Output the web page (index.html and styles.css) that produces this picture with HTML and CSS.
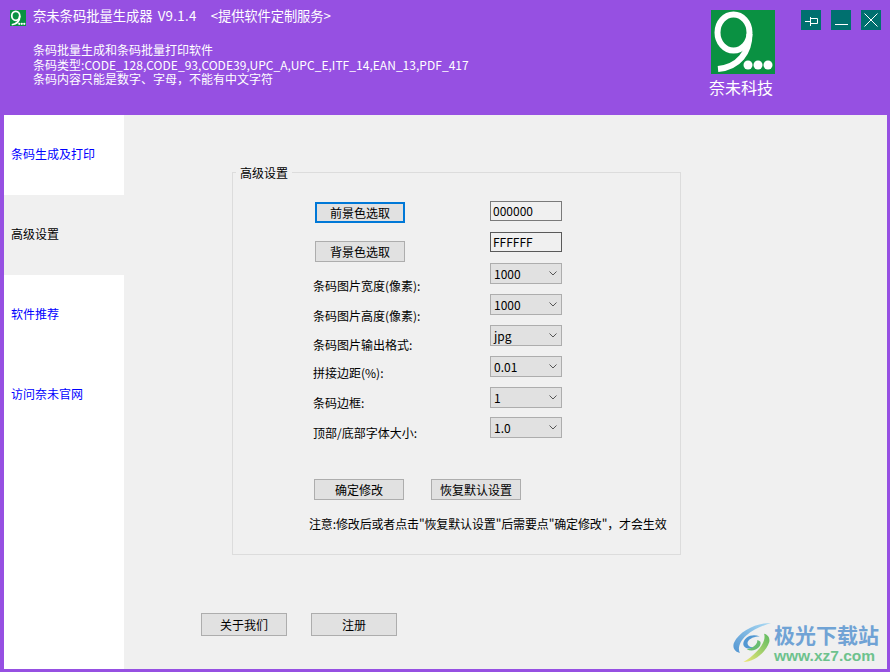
FILE: index.html
```html
<!DOCTYPE html>
<html lang="zh">
<head>
<meta charset="utf-8">
<title>奈未条码批量生成器</title>
<link rel="stylesheet" href="styles.css">
</head>
<body>
<div class="window">
  <header class="header">
    <svg class="app-icon" viewBox="0 0 64 64"><rect width="64" height="64" fill="#0a9142"/><ellipse cx="23" cy="23" rx="16" ry="18" fill="none" stroke="#fff" stroke-width="7"/><path d="M39 24C39 42 28 56 7 59" fill="none" stroke="#fff" stroke-width="7"/><circle cx="37" cy="55" r="4.500" fill="#fff"/><circle cx="47" cy="55" r="4.500" fill="#fff"/><circle cx="57" cy="55" r="4.500" fill="#fff"/></svg>
    <div class="intro">
      <div class="title"><span>奈未条码批量生成器</span><span class="version">V9.1.4</span><span class="service">&lt;提供软件定制服务&gt;</span></div>
      <div class="desc">
        <div>条码批量生成和条码批量打印软件</div>
        <div class="types">条码类型:CODE_128,CODE_93,CODE39,UPC_A,UPC_E,ITF_14,EAN_13,PDF_417</div>
        <div>条码内容只能是数字、字母，不能有中文字符</div>
      </div>
    </div>
    <div class="brand">
      <svg class="brand-logo" viewBox="0 0 64 64"><rect width="64" height="64" fill="#0a9142"/><ellipse cx="22.500" cy="22.500" rx="16" ry="18" fill="none" stroke="#fff" stroke-width="6"/><path d="M38.500 24C38.500 42 28 57 7 59" fill="none" stroke="#fff" stroke-width="6"/><circle cx="37" cy="55" r="4.500" fill="#fff"/><circle cx="47" cy="55" r="4.500" fill="#fff"/><circle cx="57" cy="55" r="4.500" fill="#fff"/></svg>
      <div class="brand-name">奈未科技</div>
    </div>
    <div class="win-buttons">
      <div class="win-btn"><svg viewBox="0 0 20 20"><path d="M4 11.500H9.500M9.500 7V16M9.500 8.500H16.500V13.500H9.500" fill="none" stroke="#fff"/></svg></div>
      <div class="win-btn"><svg viewBox="0 0 20 20"><path d="M4 14.500H17" fill="none" stroke="#fff"/></svg></div>
      <div class="win-btn"><svg viewBox="0 0 20 20"><path d="M3.500 3.500L16.500 16.500M16.500 3.500L3.500 16.500" fill="none" stroke="#fff"/></svg></div>
    </div>
  </header>
  <div class="body">
    <nav class="sidebar">
      <div class="tab">条码生成及打印</div>
      <div class="tab active">高级设置</div>
      <div class="tab">软件推荐</div>
      <div class="tab">访问奈未官网</div>
    </nav>
    <main class="main">
      <section class="group">
        <div class="legend">高级设置</div>
        <div class="columns">
          <div class="col-left">
            <button class="btn focused">前景色选取</button>
            <button class="btn second">背景色选取</button>
            <div class="label l1">条码图片宽度(像素):</div>
            <div class="label l2">条码图片高度(像素):</div>
            <div class="label l3">条码图片输出格式:</div>
            <div class="label l4">拼接边距(%):</div>
            <div class="label l5">条码边框:</div>
            <div class="label l5">顶部/底部字体大小:</div>
          </div>
          <div class="col-right">
            <div class="field">000000</div>
            <div class="field">FFFFFF</div>
            <div class="select"><span>1000</span><svg viewBox="0 0 8 5"><path d="M0.500 0.500L4 4L7.500 0.500" fill="none" stroke="#555"/></svg></div>
            <div class="select"><span>1000</span><svg viewBox="0 0 8 5"><path d="M0.500 0.500L4 4L7.500 0.500" fill="none" stroke="#555"/></svg></div>
            <div class="select"><span>jpg</span><svg viewBox="0 0 8 5"><path d="M0.500 0.500L4 4L7.500 0.500" fill="none" stroke="#555"/></svg></div>
            <div class="select"><span>0.01</span><svg viewBox="0 0 8 5"><path d="M0.500 0.500L4 4L7.500 0.500" fill="none" stroke="#555"/></svg></div>
            <div class="select"><span>1</span><svg viewBox="0 0 8 5"><path d="M0.500 0.500L4 4L7.500 0.500" fill="none" stroke="#555"/></svg></div>
            <div class="select last"><span>1.0</span><svg viewBox="0 0 8 5"><path d="M0.500 0.500L4 4L7.500 0.500" fill="none" stroke="#555"/></svg></div>
          </div>
        </div>
        <div class="actions">
          <button class="btn">确定修改</button>
          <button class="btn">恢复默认设置</button>
        </div>
        <div class="note">注意:修改后或者点击"恢复默认设置"后需要点"确定修改"，才会生效</div>
      </section>
      <div class="footer-buttons">
        <button class="btn wide">关于我们</button>
        <button class="btn wide">注册</button>
      </div>
      <div class="watermark">
        <svg class="swirl" viewBox="0 0 44 44" preserveAspectRatio="none">
          <defs>
            <linearGradient id="gb" x1="0" y1="1" x2="1" y2="0"><stop offset="0" stop-color="#4a90d0"/><stop offset="1" stop-color="#a8daf4"/></linearGradient>
            <linearGradient id="gg" x1="0" y1="1" x2="1" y2="0"><stop offset="0" stop-color="#f0e870"/><stop offset="1" stop-color="#55b85a"/></linearGradient>
          </defs>
          <path d="M44 1C28 1 8 9 1 23C-1 29 3 33 8 34C5 29 8 21 15 15C24 8 34 4 44 1Z" fill="url(#gb)"/>
          <path d="M12 44C24 44 38 34 42 22C43 17 40 14 36 13C38 19 34 26 28 32C23 37 18 41 12 44Z" fill="url(#gg)"/>
          <path d="M31 16C22 12 13 17 12 23C11 28 18 31 24 28C19 28 16 25 17 22C19 18 25 16 31 16Z" fill="#4a94d2"/>
          <path d="M16 30C24 34 32 28 32 23C32 21 30 20 28 20C29 24 23 29 16 30Z" fill="#62bb6a"/>
        </svg>
        <div class="wm-text">
          <div class="wm-cn">极光下载站</div>
          <div class="wm-url">www.xz7.com</div>
        </div>
      </div>
    </main>
  </div>
</div>
</body>
</html>
```
FILE: styles.css
```css
* { box-sizing: border-box; }
html, body { margin: 0; padding: 0; }
body { width: 890px; height: 672px; overflow: hidden; font-family: "Noto Sans CJK SC", "Noto Sans", sans-serif; font-size: 12px; color: #000; }
.window { width: 890px; height: 672px; background: #9650e2; padding: 0 3px 3px 4px; display: flex; flex-direction: column; }
.header { height: 115px; margin-left: -4px; margin-right: -3px; padding: 10px 9px 0 10px; display: flex; align-items: flex-start; color: #fff; flex: none; }
.app-icon { width: 16px; height: 16px; flex: none; }
.intro { margin-left: 7px; width: 676px; flex: none; margin-top: -3px; }
.title { font-size: 13.300px; line-height: 18px; white-space: pre; }
.version { margin-left: 5px; letter-spacing: 0.300px; }
.service { margin-left: 14px; letter-spacing: -0.100px; }
.desc { margin-top: 18px; font-size: 12px; line-height: 14.500px; white-space: nowrap; }
.types { letter-spacing: 0.030px; }
.brand { width: 64px; flex: none; margin-left: 2px; margin-right: 26px; }
.brand-logo { width: 64px; height: 64px; display: block; }
.brand-name { font-size: 16px; line-height: 22px; margin-top: 2px; margin-left: -2px; white-space: nowrap; }
.win-buttons { display: flex; gap: 10px; flex: none; }
.win-btn { width: 20px; height: 20px; background: #00706f; }
.win-btn svg { width: 20px; height: 20px; display: block; }
.body { flex: 1; display: flex; min-height: 0; }
.sidebar { width: 120px; flex: none; background: #fff; }
.tab { height: 80px; padding: 0 0 4px 7px; display: flex; align-items: center; color: #0000ff; }
.tab.active { background: #f0f0f0; color: #000; }
.main { flex: 1; background: #f0f0f0; position: relative; padding: 57px 0 0 108px; }
.group { position: relative; width: 449px; height: 383px; border: 1px solid #dcdcdc; padding: 29px 0 0 80px; }
.legend { position: absolute; left: 3px; top: -8px; padding: 0 4px; background: #f0f0f0; line-height: 16px; }
.columns { display: flex; }
.col-left { width: 177px; flex: none; }
.col-right { width: 72px; margin-top: -1px; flex: none; }
.btn { display: block; font: inherit; color: #000; background: #e1e1e1; border: 1px solid #adadad; border-radius: 0; padding: 0; width: 90px; height: 21px; line-height: 17px; }
.col-left .btn { margin-left: 2px; }
.btn.focused { border: 2px solid #0078d7; }
.btn.second { margin-top: 18px; }
.label { line-height: 16px; height: 16px; white-space: nowrap; }
.l1 { margin-top: 16px; }
.l2 { margin-top: 14px; }
.l3 { margin-top: 13px; }
.l4 { margin-top: 12px; }
.l5 { margin-top: 14px; }
.field { height: 20px; border: 1px solid #7a7a7a; background: #f0f0f0; padding-left: 2px; line-height: 18px; font-size: 12px; }
.field + .field { margin-top: 11px; border-color: #5a5a5a; }
.select { height: 21px; margin-top: 10px; border: 1px solid #adadad; background: #e1e1e1; padding: 0 4px 0 3px; display: flex; align-items: center; justify-content: space-between; line-height: 18px; }
.field + .select { margin-top: 11px; }
.select.last { margin-top: 9px; }
.select svg { width: 8px; height: 5px; flex: none; }
.actions { display: flex; gap: 27px; margin-top: 38px; margin-left: 1px; }
.note { margin-top: 16px; margin-left: -4px; line-height: 16px; white-space: nowrap; letter-spacing: -0.140px; }
.footer-buttons { display: flex; gap: 24px; margin-top: 58px; margin-left: -31px; }
.btn.wide { width: 86px; height: 23px; }
.watermark { position: absolute; right: 7px; bottom: 4px; display: flex; align-items: flex-start; gap: 3px; opacity: 0.95; }
.swirl { width: 38px; height: 40px; flex: none; margin-top: 1px; }
.wm-text { width: 106px; }
.wm-cn { font-size: 21px; font-weight: 700; line-height: 26px; color: #6a9fd4; white-space: nowrap; }
.wm-url { font-family: "Liberation Sans", sans-serif; font-size: 15.500px; font-weight: 700; line-height: 18px; color: #67c088; white-space: nowrap; }
```
